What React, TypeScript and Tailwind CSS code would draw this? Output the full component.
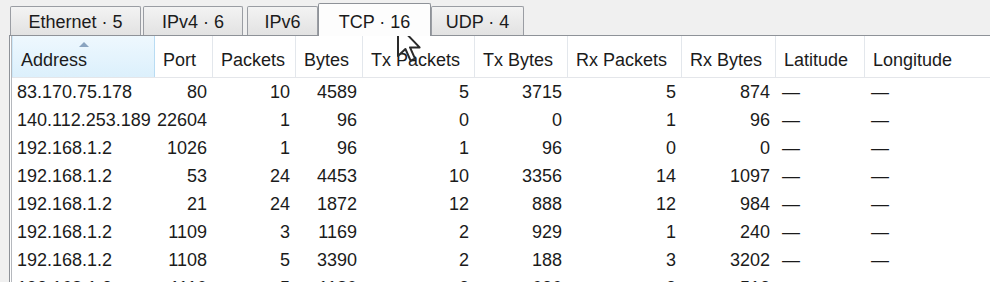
import React from "react";

const cols = [
  { name: "Address", w: 143, align: "left" },
  { name: "Port", w: 58, align: "right" },
  { name: "Packets", w: 83, align: "right" },
  { name: "Bytes", w: 67, align: "right" },
  { name: "Tx Packets", w: 112, align: "right" },
  { name: "Tx Bytes", w: 93, align: "right" },
  { name: "Rx Packets", w: 114, align: "right" },
  { name: "Rx Bytes", w: 94, align: "right" },
  { name: "Latitude", w: 89, align: "left" },
  { name: "Longitude", w: 140, align: "left" },
];

const rows: string[][] = [
  ["83.170.75.178", "80", "10", "4589", "5", "3715", "5", "874", "—", "—"],
  ["140.112.253.189", "22604", "1", "96", "0", "0", "1", "96", "—", "—"],
  ["192.168.1.2", "1026", "1", "96", "1", "96", "0", "0", "—", "—"],
  ["192.168.1.2", "53", "24", "4453", "10", "3356", "14", "1097", "—", "—"],
  ["192.168.1.2", "21", "24", "1872", "12", "888", "12", "984", "—", "—"],
  ["192.168.1.2", "1109", "3", "1169", "2", "929", "1", "240", "—", "—"],
  ["192.168.1.2", "1108", "5", "3390", "2", "188", "3", "3202", "—", "—"],
  ["192.168.1.2", "1110", "5", "1180", "2", "626", "3", "512", "—", "—"],
];

const tabs = [
  { label: "Ethernet · 5", w: 131, ml: 0 },
  { label: "IPv4 · 6", w: 100, ml: 2 },
  { label: "IPv6", w: 71, ml: 4 },
  { label: "TCP · 16", w: 113, ml: 0, sel: true },
  { label: "UDP · 4", w: 93, ml: 0 },
];

export default function App() {
  return (
    <div
      className="relative w-[990px] h-[282px] overflow-hidden bg-[#f0f0f0] text-[18px] text-[#1b1b1b]"
      style={{ fontFamily: '"Liberation Sans", Arial, sans-serif' }}
    >
      {/* Tabs */}
      <div className="flex items-end h-[35px] pl-[10px]">
        {tabs.map((t) =>
          t.sel ? (
            <div
              key={t.label}
              className="relative z-10 h-[33px] -mb-px flex items-center justify-center pt-[4px] bg-[#fdfdfd] border border-b-0 border-[#8e9298] rounded-t-[2px] leading-none"
              style={{ width: t.w, marginLeft: t.ml }}
            >
              {t.label}
            </div>
          ) : (
            <div
              key={t.label}
              className="h-[29px] flex items-center justify-center pt-[2px] bg-gradient-to-b from-[#f3f3f3] to-[#e2e2e2] border border-b-0 border-[#9a9da3] rounded-t-[2px] leading-none"
              style={{ width: t.w, marginLeft: t.ml }}
            >
              {t.label}
            </div>
          )
        )}
      </div>

      {/* Panel */}
      <div className="ml-[9px] h-[247px] border-l border-t border-[#8e9298] bg-white pl-[1px]">
        <div className="h-full border-l border-[#b5b8bd] bg-white">
          {/* Header */}
          <div className="flex h-[42px] border-b border-[#e4e6ea]">
            {cols.map((c, i) => (
              <div
                key={c.name}
                className={
                  i === 0
                    ? "relative shrink-0 flex items-center pl-[8px] pt-[8px] bg-gradient-to-b from-[#eef8fe] to-[#dcf0fc] border-r border-[#b9dcf3] border-l border-l-[#cde8f8]"
                    : "relative shrink-0 flex items-center pl-[8px] pt-[8px] border-r border-[#e3e7ec] whitespace-nowrap"
                }
                style={{ width: c.w }}
              >
                {i === 0 && (
                  <svg
                    className="absolute left-[66px] top-[6px]"
                    width="10"
                    height="5"
                    viewBox="0 0 10 5"
                  >
                    <path d="M0 5 L5 0 L10 5 Z" fill="#8aa4c0" />
                  </svg>
                )}
                {c.name}
              </div>
            ))}
          </div>

          {/* Rows */}
          {rows.map((r, ri) => (
            <div key={ri} className="flex h-[28px] items-center pt-[1px]">
              {r.map((v, ci) => {
                const c = cols[ci];
                return (
                  <div
                    key={ci}
                    className={
                      c.align === "right"
                        ? "shrink-0 text-right pr-[6px] whitespace-nowrap"
                        : ci === 0
                        ? "shrink-0 pl-[5px] whitespace-nowrap"
                        : "shrink-0 pl-[6px] whitespace-nowrap"
                    }
                    style={{ width: c.w }}
                  >
                    {v}
                  </div>
                );
              })}
            </div>
          ))}
        </div>
      </div>

      {/* Mouse cursor */}
      <svg
        className="absolute left-[397px] top-[24px]"
        width="24"
        height="38"
        viewBox="0 0 12 19"
      >
        <path
          d="M0.5 0.5 L0.5 16 L4.2 12.5 L6.8 18.3 L9 17.3 L6.5 11.7 L11.3 11.7 Z"
          fill="#ffffff"
          stroke="#2a2a2a"
          strokeWidth="1"
          strokeLinejoin="round"
        />
      </svg>
    </div>
  );
}
